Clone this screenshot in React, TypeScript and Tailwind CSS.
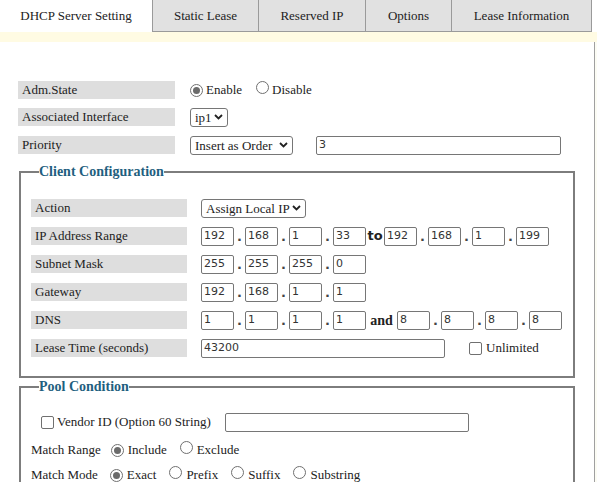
import React from "react";

const serif = { fontFamily: '"Liberation Serif", "Times New Roman", serif' };
const sans = { fontFamily: '"DejaVu Sans", Verdana, sans-serif' };

function Radio({ checked }: { checked?: boolean }) {
  return (
    <span className="inline-flex w-[13px] h-[13px] rounded-full border border-[#707070] bg-white items-center justify-center shrink-0">
      {checked && <span className="w-[7px] h-[7px] rounded-full bg-[#6b6b6b]" />}
    </span>
  );
}

function Check() {
  return <span className="inline-block w-[13px] h-[13px] rounded-[2px] border border-[#707070] bg-white shrink-0" />;
}

function Chevron() {
  return (
    <svg width="9" height="6" viewBox="0 0 9 6" className="shrink-0">
      <path d="M1 1 L4.5 4.5 L8 1" fill="none" stroke="#222" strokeWidth="1.8" />
    </svg>
  );
}

function Select({ text, w }: { text: string; w: string }) {
  return (
    <div className={`${w} h-[19px] border border-[#767676] rounded-[3px] bg-white flex items-center justify-between pl-[4px] pr-[4px] text-[13px] text-[#222]`} style={serif}>
      <span className="leading-none">{text}</span>
      <Chevron />
    </div>
  );
}

function Box({ v, w = "w-[33px]" }: { v: string; w?: string }) {
  return (
    <div className={`${w} h-[19px] border border-[#767676] rounded-[2px] bg-white flex items-center pl-[2px] text-[11px] text-[#333] shrink-0`} style={sans}>
      {v}
    </div>
  );
}

function Dot() {
  return <span className="w-[11px] text-center text-[13px] font-bold text-[#444] leading-none shrink-0" style={sans}>.</span>;
}

function IP({ a }: { a: string[] }) {
  return (
    <div className="flex items-center">
      <Box v={a[0]} />
      <Dot />
      <Box v={a[1]} />
      <Dot />
      <Box v={a[2]} />
      <Dot />
      <Box v={a[3]} />
    </div>
  );
}

function Label({ text, w }: { text: string; w: string }) {
  return (
    <div className={`${w} h-[18px] bg-[#dedede] flex items-center pl-[4px] text-[13px] text-[#222] shrink-0`} style={serif}>
      {text}
    </div>
  );
}

function Tab({ text, w, active }: { text: string; w: string; active?: boolean }) {
  return (
    <div
      className={`${w} h-[32px] flex items-center justify-center text-[13px] text-[#222] ${
        active ? "bg-white" : "bg-[#e1e1e1] border-l border-b border-[#9a9a9a]"
      }`}
      style={serif}
    >
      {text}
    </div>
  );
}

export default function App() {
  return (
    <div className="w-[597px] h-[482px] overflow-hidden bg-white text-[#222]" style={serif}>
      <div className="flex h-[32px]">
        <Tab text="DHCP Server Setting" w="w-[152px]" active />
        <Tab text="Static Lease" w="w-[106px]" />
        <Tab text="Reserved IP" w="w-[107px]" />
        <Tab text="Options" w="w-[86px]" />
        <div className="w-[141px] h-[32px] flex items-center justify-center text-[13px] bg-[#e1e1e1] border-l border-r border-b border-[#9a9a9a]">
          Lease Information
        </div>
      </div>
      <div className="h-[10px] bg-[#fffbe3]" />
      <div className="flex h-[440px]">
        <div className="w-[595px] border-r border-[#a0a0a0] bg-white pt-[39px]">
          <div className="pl-[18px]">
            <div className="flex items-center h-[18px]">
              <Label text="Adm.State" w="w-[157px]" />
              <div className="flex items-center ml-[15px] text-[13px]">
                <Radio checked />
                <span className="ml-[3px]">Enable</span>
                <span className="ml-[14px]"><Radio /></span>
                <span className="ml-[3px]">Disable</span>
              </div>
            </div>
            <div className="flex items-center h-[18px] mt-[9px]">
              <Label text="Associated Interface" w="w-[157px]" />
              <div className="ml-[15px]">
                <Select text="ip1" w="w-[38px]" />
              </div>
            </div>
            <div className="flex items-center h-[18px] mt-[10px]">
              <Label text="Priority" w="w-[157px]" />
              <div className="ml-[15px]">
                <Select text="Insert as Order" w="w-[103px]" />
              </div>
              <div className="ml-[23px]">
                <Box v="3" w="w-[245px]" />
              </div>
            </div>
          </div>

          <fieldset className="ml-[19px] w-[556px] border-2 border-[#7d7d7d] mt-[10px] pl-[10px] pb-[19px]">
            <legend className="ml-[8px] text-[14px] leading-[16px] font-bold text-[#1f5f80]">Client Configuration</legend>
            <div className="flex items-center h-[18px] mt-[19px]">
              <Label text="Action" w="w-[156px]" />
              <div className="ml-[14px]">
                <Select text="Assign Local IP" w="w-[105px]" />
              </div>
            </div>
            <div className="flex items-center h-[18px] mt-[10px]">
              <Label text="IP Address Range" w="w-[156px]" />
              <div className="ml-[14px] flex items-center">
                <IP a={["192", "168", "1", "33"]} />
                <span className="w-[18px] text-center text-[13px] font-bold" style={sans}>to</span>
                <IP a={["192", "168", "1", "199"]} />
              </div>
            </div>
            <div className="flex items-center h-[18px] mt-[10px]">
              <Label text="Subnet Mask" w="w-[156px]" />
              <div className="ml-[14px]">
                <IP a={["255", "255", "255", "0"]} />
              </div>
            </div>
            <div className="flex items-center h-[18px] mt-[10px]">
              <Label text="Gateway" w="w-[156px]" />
              <div className="ml-[14px]">
                <IP a={["192", "168", "1", "1"]} />
              </div>
            </div>
            <div className="flex items-center h-[18px] mt-[10px]">
              <Label text="DNS" w="w-[156px]" />
              <div className="ml-[14px] flex items-center">
                <IP a={["1", "1", "1", "1"]} />
                <span className="w-[31px] text-center text-[14px] font-bold">and</span>
                <IP a={["8", "8", "8", "8"]} />
              </div>
            </div>
            <div className="flex items-center h-[18px] mt-[10px]">
              <Label text="Lease Time (seconds)" w="w-[156px]" />
              <div className="ml-[14px]">
                <Box v="43200" w="w-[244px]" />
              </div>
              <div className="ml-[24px] flex items-center text-[13px]">
                <Check />
                <span className="ml-[4px]">Unlimited</span>
              </div>
            </div>
          </fieldset>

          <fieldset className="ml-[19px] w-[556px] border-2 border-[#7d7d7d] mt-[1px] pl-[10px] pb-[19px]">
            <legend className="ml-[8px] text-[14px] leading-[16px] font-bold text-[#1f5f80]">Pool Condition</legend>
            <div className="flex items-center h-[18px] mt-[18px] pl-[10px] text-[13px]">
              <Check />
              <span className="ml-[3px]">Vendor ID (Option 60 String)</span>
              <div className="ml-[14px]">
                <Box v="" w="w-[244px]" />
              </div>
            </div>
            <div className="flex items-center h-[18px] mt-[10px] text-[13px]">
              <span>Match Range</span>
              <span className="ml-[10px]"><Radio checked /></span>
              <span className="ml-[4px]">Include</span>
              <span className="ml-[13px]"><Radio /></span>
              <span className="ml-[4px]">Exclude</span>
            </div>
            <div className="flex items-center h-[18px] mt-[7px] text-[13px]">
              <span>Match Mode</span>
              <span className="ml-[12px]"><Radio checked /></span>
              <span className="ml-[4px]">Exact</span>
              <span className="ml-[13px]"><Radio /></span>
              <span className="ml-[4px]">Prefix</span>
              <span className="ml-[13px]"><Radio /></span>
              <span className="ml-[4px]">Suffix</span>
              <span className="ml-[13px]"><Radio /></span>
              <span className="ml-[4px]">Substring</span>
            </div>
          </fieldset>
        </div>
        <div className="flex-1 bg-[#fcfcf4]" />
      </div>
    </div>
  );
}
